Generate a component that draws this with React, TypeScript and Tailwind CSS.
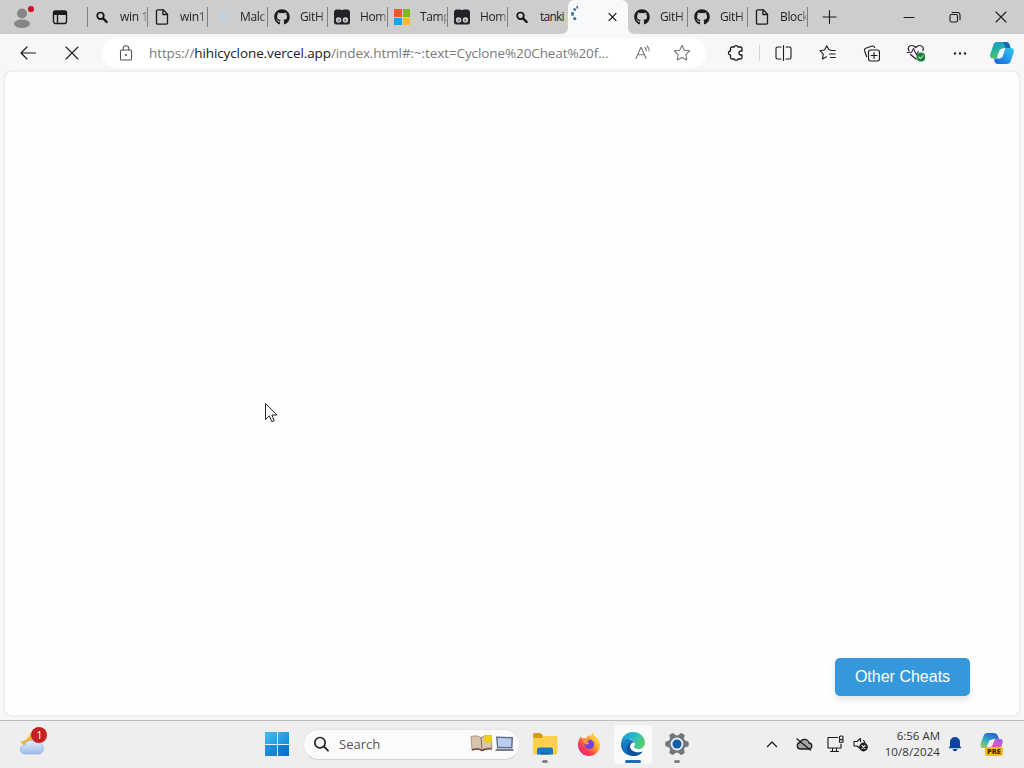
import type { ReactNode } from "react";
import { FaGithub } from "react-icons/fa";

type IconProps = { size?: number; w?: number; stroke?: string; sw?: number; children: ReactNode };

// All line icons are drawn in real pixels, so the viewBox equals the rendered size.
function Icon({ size = 20, w, stroke = "#1b1b1b", sw = 1.1, children }: IconProps) {
  return (
    <svg
      className="shrink-0"
      width={w ?? size}
      height={size}
      viewBox={`0 0 ${w ?? size} ${size}`}
      fill="none"
      stroke={stroke}
      strokeWidth={sw}
      strokeLinecap="round"
      strokeLinejoin="round"
    >
      {children}
    </svg>
  );
}

function SearchFavicon() {
  return (
    <Icon size={16} sw={1.7} stroke="#111">
      <circle cx="6.5" cy="6.8" r="3.3" />
      <path d="M9.300 9.600l3.400 3.400" strokeWidth={2.3} />
    </Icon>
  );
}

function PageFavicon() {
  return (
    <Icon size={16} sw={1.3}>
      <path d="M3.500 .8h5.700l4.300 4.300v9c0 .6-.4 1.100-1.100 1.100H3.600c-.7 0-1.100-.5-1.100-1.100V1.900C2.500 1.300 2.900.8 3.500.8z" />
      <path d="M8.900 1v4.500h4.500" />
    </Icon>
  );
}

function TamperFavicon() {
  return (
    <Icon size={16} stroke="none">
      <path d="M3 .5h3.500q1.500 1 3 0H13a3 3 0 0 1 3 3v9.500a2.500 2.500 0 0 1-2.500 2.500h-11A2.500 2.500 0 0 1 0 13V3.500a3 3 0 0 1 3-3z" fill="#202225" />
      <circle cx="4.600" cy="11" r="2.700" fill="#d2d2d2" />
      <circle cx="11.400" cy="11" r="2.700" fill="#d2d2d2" />
      <circle cx="4.800" cy="11.200" r="1.200" fill="#77797b" />
      <circle cx="11.200" cy="11.200" r="1.200" fill="#77797b" />
    </Icon>
  );
}

function MicrosoftFavicon() {
  return (
    <div className="grid h-4 w-4 grid-cols-2 gap-px">
      <i className="bg-[#f0562b]" />
      <i className="bg-[#7fba1b]" />
      <i className="bg-[#16a5ea]" />
      <i className="bg-[#fdbb15]" />
    </div>
  );
}

function PaleFavicon() {
  return (
    <Icon size={16} stroke="#bfd3e2" sw={1.600}>
      <path d="M4 2c3 1 5 3 5 7s2 4 4 3M4 13c3 0 5-3 5-7s2-4 4-3M4 7.500h8" />
    </Icon>
  );
}

const github = <FaGithub size={16} color="#1c1c1f" />;

const leftTabs = [
  { label: "win 1", icon: <SearchFavicon /> },
  { label: "win1", icon: <PageFavicon /> },
  { label: "Malc", icon: <PaleFavicon /> },
  { label: "GitH", icon: github },
  { label: "Hom", icon: <TamperFavicon /> },
  { label: "Tamp", icon: <MicrosoftFavicon /> },
  { label: "Hom", icon: <TamperFavicon /> },
  { label: "tanki", icon: <SearchFavicon /> },
];

const rightTabs = [
  { label: "GitH", icon: github },
  { label: "GitH", icon: github },
  { label: "Block", icon: <PageFavicon /> },
];

type TabProps = { label: string; icon: ReactNode; last?: boolean };

function Tab({ label, icon, last }: TabProps) {
  return (
    <div className="flex h-[34px] w-[60px] shrink-0 items-center pl-[6px]">
      {icon}
      <span
        className={`ml-[10px] w-[27px] whitespace-nowrap text-[12px] leading-[18px] text-[#222] ${
          last
            ? "tracking-[-0.75px]"
            : "tracking-[-0.35px] [mask-image:linear-gradient(to_right,#000_72%,rgba(0,0,0,0.25))]"
        }`}
      >
        {label}
      </span>
      {!last && <span className="h-5 w-px bg-[#808080]" />}
    </div>
  );
}

// The tab body flares out over its neighbours at the bottom, so only the flares overlap them.
function ActiveTab() {
  return (
    <div className="relative flex h-[34px] w-[60px] shrink-0 items-center">
      <svg className="absolute -left-[7px] top-0" width="74" height="34" viewBox="0 0 74 34">
        <path d="M0 34q7 0 7-7V7q0-7 7-7h46q7 0 7 7v20q0 7 7 7z" fill="#f8f9fa" />
        <g fill="none" stroke="#2d6f9f" strokeWidth="2.600">
          <path d="M14.400 8.600l-1.400 1.700" />
          <path d="M11.600 12.200l-.2 3.400" />
          <path d="M12.700 17.600l2 2" />
          <path d="M15.500 7.500l1.500-.5" />
        </g>
        <path d="M47.700 13.200l7.600 7.600M55.300 13.200l-7.600 7.600" stroke="#111" strokeWidth="1.200" />
      </svg>
    </div>
  );
}

function TabStrip() {
  return (
    <div className="flex h-[34px] items-center bg-[#cdcdcd]">
      <div className="flex w-[44px] justify-center">
        <Icon size={26} w={26} stroke="none">
          <circle cx="13" cy="9.500" r="5" fill="#868686" />
          <ellipse cx="13" cy="19.800" rx="8" ry="4.200" fill="#868686" />
          <circle cx="22" cy="5" r="3.100" fill="#d10f2a" />
        </Icon>
      </div>
      <div className="flex w-[32px] justify-center">
        <Icon size={16} sw={1.400}>
          <rect x="1.500" y="2" width="13" height="12.500" rx="2" />
          <path d="M2 2.600h12v2.700H2z" fill="#1b1b1b" />
          <path d="M5.500 5.500v9" />
        </Icon>
      </div>
      <span className="ml-[11px] h-5 w-px bg-[#808080]" />
      {leftTabs.map((t, i) => (
        <Tab key={i} {...t} last={i === leftTabs.length - 1} />
      ))}
      <ActiveTab />
      {rightTabs.map((t, i) => (
        <Tab key={i} {...t} />
      ))}
      <div className="flex w-[42px] justify-center">
        <Icon size={16}>
          <path d="M8.500 1.500v13M2 8h13" />
        </Icon>
      </div>
      <div className="ml-auto flex">
        <div className="flex w-[46px] justify-center">
          <Icon size={14} sw={1.100}>
            <path d="M2 7.500h10" />
          </Icon>
        </div>
        <div className="flex w-[46px] justify-center">
          <Icon size={14} sw={1.100}>
            <rect x="2" y="4.500" width="7.500" height="7.500" rx="1.500" />
            <path d="M4.200 2.500h5.300a2.500 2.500 0 0 1 2.500 2.500v4.800" />
          </Icon>
        </div>
        <div className="flex w-[46px] justify-center">
          <Icon size={14}>
            <path d="M2 2l10 10M12 2L2 12" />
          </Icon>
        </div>
      </div>
    </div>
  );
}

function CopilotLogo() {
  return (
    <svg width="26" height="26" viewBox="0 0 26 26">
      <defs>
        <linearGradient id="cpA" x1="0" y1="0" x2=".3" y2="1">
          <stop offset="0" stopColor="#1693d6" />
          <stop offset=".5" stopColor="#28b39f" />
          <stop offset="1" stopColor="#52c56b" />
        </linearGradient>
        <linearGradient id="cpB" x1="1" y1="0" x2="0" y2="1">
          <stop offset="0" stopColor="#2fcbe8" />
          <stop offset=".5" stopColor="#2297ed" />
          <stop offset="1" stopColor="#195ed5" />
        </linearGradient>
      </defs>
      <path d="M8 2h9c2 0 3 1 3.500 2.500L21.500 8h-5c-2 0-3 1-3.600 3l-1.400 5c-.5 1.800-1.500 2.500-3 2.500H4c-2.300 0-3.500-2-2.800-4.300L4.500 4.500C5 3 6 2 8 2z" fill="url(#cpA)" />
      <path d="M18 24H9c-2 0-3-1-3.500-2.500L5 18.500h4c2 0 2.700-1 3.300-3l1.500-5C14.300 8.700 15.300 8 17 8h5c2.300 0 3.500 2 2.800 4.300L21.500 21.500C21 23 20 24 18 24z" fill="url(#cpB)" />
      <path d="M14 2h3c2 0 3 1 3.500 2.500L21.500 8h-5z" fill="#1668ba" />
      <path d="M10.800 9.800q2-1.800 5.700-1.800l-3 9q-1.600 1.500-4.300 1.500-1.500-.3-.8-2.500z" fill="#effaff" />
    </svg>
  );
}

function Cell({ children }: { children: ReactNode }) {
  return <div className="flex w-[44px] shrink-0 justify-center">{children}</div>;
}

function Toolbar() {
  return (
    <div className="flex h-[37px] items-center bg-[#f7f7f7] pl-[6px]">
      <Cell>
        <Icon size={18} sw={1.200}>
          <path d="M16.500 9H2M8 3L2 9l6 6" />
        </Icon>
      </Cell>
      <Cell>
        <Icon size={18}>
          <path d="M3 3l12 12M15 3L3 15" />
        </Icon>
      </Cell>
      <div className="ml-2 flex h-[30px] w-[604px] shrink-0 items-center rounded-full bg-white pl-[16px]">
        <Icon size={16} stroke="#555">
          <rect x="2.500" y="5" width="11" height="10" rx="1" />
          <path d="M5.200 5V3.500a2.800 2.800 0 0 1 5.600 0V5" />
          <circle cx="8" cy="10" r=".5" fill="#555" />
        </Icon>
        <span className="ml-[15px] w-[470px] whitespace-nowrap pt-px text-[13.500px] tracking-[-0.1px] text-[#7a7a7a]">
          https://<span className="text-[#202020]">hihicyclone.vercel.app</span>/index.html#:~:text=Cyclone%20Cheat%20f...
        </span>
        <div className="ml-[15px] flex w-[18px] justify-center">
          <Icon size={18} stroke="#777">
            <path d="M2 14.500L6.800 3.500h.4L12 14.500M3.700 10.800h6.600" />
            <path d="M11 3.500q1.500 1.500 1.200 3.500M13 2q2.500 2.300 2.100 5" />
          </Icon>
        </div>
        <div className="ml-[21px]">
          <Icon size={18} stroke="#777">
            <path d="M9 1.300l2.300 4.900 5.400.7-3.900 3.700 1 5.400L9 13.400 4.200 16l1-5.400L1.300 6.900l5.400-.7z" />
          </Icon>
        </div>
      </div>
      <div className="ml-2">
        <Cell>
          <Icon size={18} sw={1.300}>
            <path d="M5 3h2.200a2 2 0 0 1 3.800 0h2.500A1.500 1.500 0 0 1 15 4.500V7h-1a2 2 0 0 0 0 4h1v2.500a1.500 1.500 0 0 1-1.500 1.500H11a2 2 0 0 1-3.800 0H5a1.500 1.500 0 0 1-1.500-1.500V11a2 2 0 0 1 0-4V4.500A1.500 1.500 0 0 1 5 3z" />
          </Icon>
        </Cell>
      </div>
      <span className="mx-px h-4 w-px bg-[#d4d4d4]" />
      <Cell>
        <Icon size={18}>
          <path d="M7 3H3.500C2.600 3 2 3.600 2 4.500v9c0 .9.600 1.500 1.500 1.500H7M12 3h3.500c.9 0 1.500.6 1.500 1.500v9c0 .9-.6 1.500-1.500 1.500H12M9.500 1.500v15" />
        </Icon>
      </Cell>
      <Cell>
        <Icon size={18}>
          <path d="M12.500 6l-1.600-.2-2.100-4.100L6.600 6l-4.800.7 3.500 3.400-.9 4.900 4.100-2.200M13 6.500h4.200M11.500 10h5.700M12.500 13.500h4.700" />
        </Icon>
      </Cell>
      <Cell>
        <Icon size={18}>
          <rect x="6.500" y="6" width="11" height="11" rx="2.200" />
          <path d="M12 8.500v6M9 11.500h6M4.700 12.800L2.600 7c-.4-1.200 0-2.300 1.200-2.700L10 2.100c1.200-.4 2.300.2 2.700 1.500" />
        </Icon>
      </Cell>
      <Cell>
        <Icon size={20} sw={1.200}>
          <path d="M4 8C2 4.500 4.500 2.500 6.800 2.500c1.900 0 3.100 1.100 3.900 2 .8-.9 2-2 3.900-2 2.700 0 4.600 2.400 3.300 5M5.500 11.500L11 16" />
          <path d="M2 9.500h4.500l2-4 3 6.500 1.700-3.500" stroke="#50305f" />
          <circle cx="16" cy="14" r="4.500" fill="#15803c" stroke="none" />
          <path d="M13.800 14l1.600 1.600 2.800-3" stroke="#a8dcb0" />
        </Icon>
      </Cell>
      <Cell>
        <Icon size={18} stroke="none">
          <g fill="#222">
            <circle cx="5" cy="9.500" r="1.200" />
            <circle cx="10" cy="9.500" r="1.200" />
            <circle cx="15" cy="9.500" r="1.200" />
          </g>
        </Icon>
      </Cell>
      <div className="ml-[8px]">
        <CopilotLogo />
      </div>
    </div>
  );
}

function WeatherIcon() {
  return (
    <svg width="32" height="32" viewBox="0 0 32 32">
      <defs>
        <linearGradient id="cloud" x1="0" y1="0" x2="0" y2="1">
          <stop offset="0" stopColor="#e5effc" />
          <stop offset="1" stopColor="#9dbbe7" />
        </linearGradient>
      </defs>
      <path d="M12 5.500q0 7-9.500 9.500 3 4 7 4l7-8z" fill="#edb52f" />
      <path d="M7 27a4.500 4.500 0 0 1-.5-9 6.500 6.500 0 0 1 11.500-2 5.600 5.600 0 0 1 3.500 11z" fill="url(#cloud)" stroke="#8faddd" strokeWidth=".6" />
      <circle cx="21" cy="8" r="8" fill="#c62020" />
      <text x="21.300" y="12" textAnchor="middle" fontSize="11" fill="#fff">
        1
      </text>
    </svg>
  );
}

function SearchBox() {
  return (
    <div className="ml-[14px] flex h-[31px] w-[217px] shrink-0 items-center rounded-full border border-[#e6e6e6] border-b-[#d2d2d2] bg-[#fbfbfb] pl-[9px]">
      <Icon size={16} stroke="#222" sw={1.700}>
        <circle cx="7" cy="6.700" r="5.200" />
        <path d="M11 10.700l4 4" />
      </Icon>
      <span className="ml-[10px] w-[130px] pt-px text-[13px] text-[#555]">Search</span>
      <svg className="-translate-y-px" width="46" height="20" viewBox="0 0 46 20">
        <path d="M2 3.500q5-2 10 1 4-3 10-2l1 12.500q-6-1-10 1.500-5-2-10 .5z" fill="#d9c5ae" stroke="#a08570" strokeWidth=".8" />
        <path d="M12 4.500l1 11" stroke="#86664f" />
        <path d="M3 17q5-2 10 .5 5-2.500 10-1.500" fill="none" stroke="#67483b" strokeWidth="1.500" />
        <circle cx="19" cy="6" r="4.200" fill="#f2cf17" />
        <path d="M27 3.500l17 .5-.5 11.500-15.500-.5z" fill="#5e6b86" />
        <path d="M28.500 5l14 .4-.4 8.600-13-.3z" fill="#b9cdf0" />
        <path d="M27.500 15.500l16.500.5 1 2H26z" fill="#777e8f" />
      </svg>
    </div>
  );
}

function AppButton({ children, active, running }: { children: ReactNode; active?: boolean; running?: boolean }) {
  return (
    <div className="flex w-[44px] shrink-0 justify-center">
      <div
        className={`relative flex h-[39px] w-[38px] items-center justify-center rounded pb-px ${active ? "bg-[#fafafa]" : ""}`}
      >
        {children}
        {active && <span className="absolute bottom-[1px] h-[3px] w-4 rounded-full bg-[#1670b4]" />}
        {running && <span className="absolute bottom-[1px] h-[3px] w-[6px] rounded-full bg-[#858585]" />}
      </div>
    </div>
  );
}

function ExplorerIcon() {
  return (
    <svg width="26" height="26" viewBox="0 0 26 26">
      <path d="M1 3.500Q1 2 2.500 2h6L11 4.500V9H1z" fill="#d99a16" />
      <path d="M1 7h8.500L12 5h12q1.500 0 1.500 1.500V22q0 1.500-1.500 1.500H2.500Q1 23.500 1 22z" fill="#fcd04c" />
      <path d="M5 23.500V19q0-2.500 2.500-2.500h11q2.500 0 2.500 2.500v4.500z" fill="#1879c4" />
      <path d="M9 23.500v-1.500q0-.7.700-.7h6.600q.7 0 .7.700v1.500z" fill="#1668ae" />
    </svg>
  );
}

function FirefoxIcon() {
  return (
    <svg width="24" height="24" viewBox="0 0 24 24">
      <defs>
        <linearGradient id="ff" x1=".85" y1=".1" x2=".15" y2=".9">
          <stop offset="0" stopColor="#ffe04a" />
          <stop offset=".4" stopColor="#ff9a2b" />
          <stop offset=".75" stopColor="#fb3c52" />
          <stop offset="1" stopColor="#e22585" />
        </linearGradient>
      </defs>
      <path d="M4 4.500q.4 1.300 1.500 2Q7 6 9 6.300 10 4 13 3q-.3 1.200.8 2 .3-2.500 2-4.500.7 2.500 3.200 4.500 4 3 4 8a11 11 0 0 1-22 0q0-5 3-8.500z" fill="url(#ff)" />
      <circle cx="12.300" cy="12.300" r="4.800" fill="#7542d8" />
      <path d="M5.500 8.500q3-2 7 .3-2.500.2-2.500 1.500 1 .7 2.500.5-1 2-3.300 1.600-2-.4-3.700-3.900z" fill="#ff972b" />
      <path d="M15 6q5 3 3.500 9 2-2 1.500-5 3 5-1 9 5-3 4-8Q22 7 15 6z" fill="#ffd33d" opacity=".8" />
    </svg>
  );
}

function EdgeIcon() {
  return (
    <svg width="26" height="26" viewBox="0 0 26 26">
      <defs>
        <linearGradient id="edgeTop" x1="0" y1=".3" x2="1" y2=".6">
          <stop offset="0" stopColor="#1b9bdb" />
          <stop offset=".5" stopColor="#27bcc5" />
          <stop offset="1" stopColor="#5bd266" />
        </linearGradient>
        <linearGradient id="edgeLow" x1="0" y1="0" x2=".4" y2="1">
          <stop offset="0" stopColor="#1b87d0" />
          <stop offset="1" stopColor="#0c63b1" />
        </linearGradient>
      </defs>
      <path d="M1 12.500C1.500 5.500 6.500 1 13 1c7 0 12 5 12 10.500 0 4-3 6.500-6.500 6.500-3 0-4.500-1.200-4.500-2 0-.7 1-1 1-3 0-3-3-5-6.500-5C5 8 2 10 1 12.500z" fill="url(#edgeTop)" />
      <path d="M1 13C1.500 9.500 5 7.500 8.500 8c3 .3 5.500 1.800 6.300 3.800C12 11 10 13 10 15.500c0 3.500 4 6 8 6 2 0 3.500-.4 4.700-1C20.600 23.500 17 25 13 25 6 25 .5 19.500 1 13z" fill="url(#edgeLow)" />
      <path d="M10 15.500c0 3.500 4 6 8 6 2 0 3.500-.4 4.700-1C20.600 23.500 17 25 13 25c-4.500-1-6.500-5-6-8.500.4-3 3-5.500 7.800-4.700C12 11 10 13 10 15.500z" fill="#0d519f" />
    </svg>
  );
}

function GearIcon() {
  return (
    <svg width="26" height="26" viewBox="0 0 26 26">
      <g fill="#72777c">
        <circle cx="13" cy="13" r="8.800" />
        {[30, 90, 150, 210, 270, 330].map((a) => (
          <path key={a} d="M9.500 5.500l1.200-4q2.300-.7 4.600 0l1.200 4z" transform={`rotate(${a} 13 13)`} />
        ))}
      </g>
      <circle cx="13" cy="13" r="6.400" fill="#e5edf3" />
      <circle cx="13" cy="13" r="4.500" fill="#155da8" />
    </svg>
  );
}

function TrayCopilot() {
  return (
    <svg width="26" height="26" viewBox="0 0 26 26">
      <defs>
        <linearGradient id="trayA" x1=".5" y1="0" x2="0" y2="1">
          <stop offset="0" stopColor="#246bd0" />
          <stop offset=".5" stopColor="#39b3ba" />
          <stop offset="1" stopColor="#b2cc42" />
        </linearGradient>
        <linearGradient id="trayB" x1=".8" y1="0" x2="0" y2="1">
          <stop offset="0" stopColor="#a760e5" />
          <stop offset=".55" stopColor="#eb58a3" />
          <stop offset="1" stopColor="#f79545" />
        </linearGradient>
      </defs>
      <path d="M8 2h7q3 0 3.700 2.500L20 8h-4q-2 0-3 3l-1 3q-1 3-3 3H4q-3.500 0-2.500-4l3-8Q5.500 2 8 2z" fill="url(#trayA)" />
      <path d="M18 22H9q-2 0-2.500-4h3q2 0 3-3l1.500-4q1-3 3-3h4q3.500 0 2.500 4l-2.500 7q-1 3-3 3z" fill="url(#trayB)" />
      <path d="M10.500 9.500q1.500-1.500 5.500-1.500L13 15q-1 2-4 2-1.500-.5-1-2z" fill="#f5eff5" />
      <rect x="6" y="16" width="18" height="9" rx="2" fill="#f8b91c" />
      <text x="15" y="23.300" textAnchor="middle" fontSize="7.500" fontWeight="800" fill="#4b2600">
        PRE
      </text>
    </svg>
  );
}

function Taskbar() {
  return (
    <div className="flex h-[48px] items-center border-t border-[#bcbcc0] bg-[#eeeeee] pb-px">
      <div className="ml-[18px] w-[32px] -translate-y-px">
        <WeatherIcon />
      </div>
      <div className="ml-[215px] grid h-6 w-6 grid-cols-2 gap-px">
        <i className="bg-gradient-to-br from-[#49bdf0] to-[#259bdf]" />
        <i className="bg-gradient-to-br from-[#35afea] to-[#168ad6]" />
        <i className="bg-gradient-to-br from-[#2498dc] to-[#117bcb]" />
        <i className="bg-gradient-to-br from-[#1685d1] to-[#096bc0]" />
      </div>
      <SearchBox />
      <div className="ml-[3px] flex">
        <AppButton running>
          <ExplorerIcon />
        </AppButton>
        <AppButton>
          <FirefoxIcon />
        </AppButton>
        <AppButton active>
          <EdgeIcon />
        </AppButton>
        <AppButton running>
          <GearIcon />
        </AppButton>
      </div>
      <div className="ml-[65px] flex items-center">
        <Icon size={16} sw={1.300}>
          <path d="M3.500 10.500L8 6l4.500 4.500" />
        </Icon>
        <div className="ml-[15px]">
          <Icon size={18} sw={1.300}>
            <path d="M5 14h8.500a3 3 0 0 0 .5-6A4.700 4.700 0 0 0 5 7.500a3.300 3.300 0 0 0 0 6.500z" fill="#a5a5a5" />
            <path d="M2 4L15.500 15" />
          </Icon>
        </div>
        <div className="ml-[13px]">
          <Icon size={18}>
            <path d="M11.500 2.500H2V13h13V9M6.500 13.500v3M10.500 13.500v3M4.500 16.500h8" />
            <rect x="13.500" y="1" width="3.500" height="3.500" rx="1" />
            <path d="M13.500 4.800h3.500v2.500h-3.500z" />
          </Icon>
        </div>
        <div className="ml-[8px]">
          <Icon size={18} w={18}>
            <path d="M7.500 13L5 11H2V6.500h3L8.500 3.500v3M11.500 5.500q1.200 1 1.200 2" />
            <circle cx="11.500" cy="12" r="4.400" fill="#222" stroke="none" />
            <path d="M10 10.500l3 3M13 10.500l-3 3" stroke="#eee" />
          </Icon>
        </div>
        <div className="ml-[8px] w-[62px] whitespace-nowrap text-right text-[11.500px] leading-4 text-[#333]">
          <div>6:56 AM</div>
          <div className="tracking-[0.1px]">10/8/2024</div>
        </div>
        <div className="ml-[7px]">
          <Icon size={16} stroke="none">
            <path d="M8 1a5 5 0 0 1 5 5v4l1.500 2.300H1.500L3 10V6a5 5 0 0 1 5-5zM5.500 13h5q-.7 2.300-2.500 2.300T5.500 13z" fill="#0a459d" />
          </Icon>
        </div>
        <div className="ml-[16px]">
          <TrayCopilot />
        </div>
      </div>
    </div>
  );
}

export default function App() {
  return (
    <div className="flex h-[768px] w-[1024px] flex-col overflow-hidden bg-[#f7f7f7] font-['Open_Sans','Noto_Sans',sans-serif]">
      <TabStrip />
      <Toolbar />
      <main className="mx-[4px] mb-[4px] flex min-h-0 flex-1 items-end justify-end rounded-lg border border-[#f0f0f0] bg-[#fefefe] pr-[49px] pb-[19px] shadow-[0_0_2px_rgba(0,0,0,0.12)]">
        <button className="h-[38px] w-[135px] rounded-[5px] bg-[#3498db] pb-px font-['Liberation_Sans',sans-serif] text-[16px] text-white shadow-[0_4px_6px_rgba(0,0,0,0.1)]">
          Other Cheats
        </button>
      </main>
      <Taskbar />
      <svg className="absolute left-[264px] top-[402px]" width="14" height="22" viewBox="0 0 14 22">
        <path d="M1.500 1.500v16l3.800-3.600 2.500 5.800 2.500-1.100-2.400-5.600h5z" fill="#fff" stroke="#222" strokeWidth="1" />
      </svg>
    </div>
  );
}
